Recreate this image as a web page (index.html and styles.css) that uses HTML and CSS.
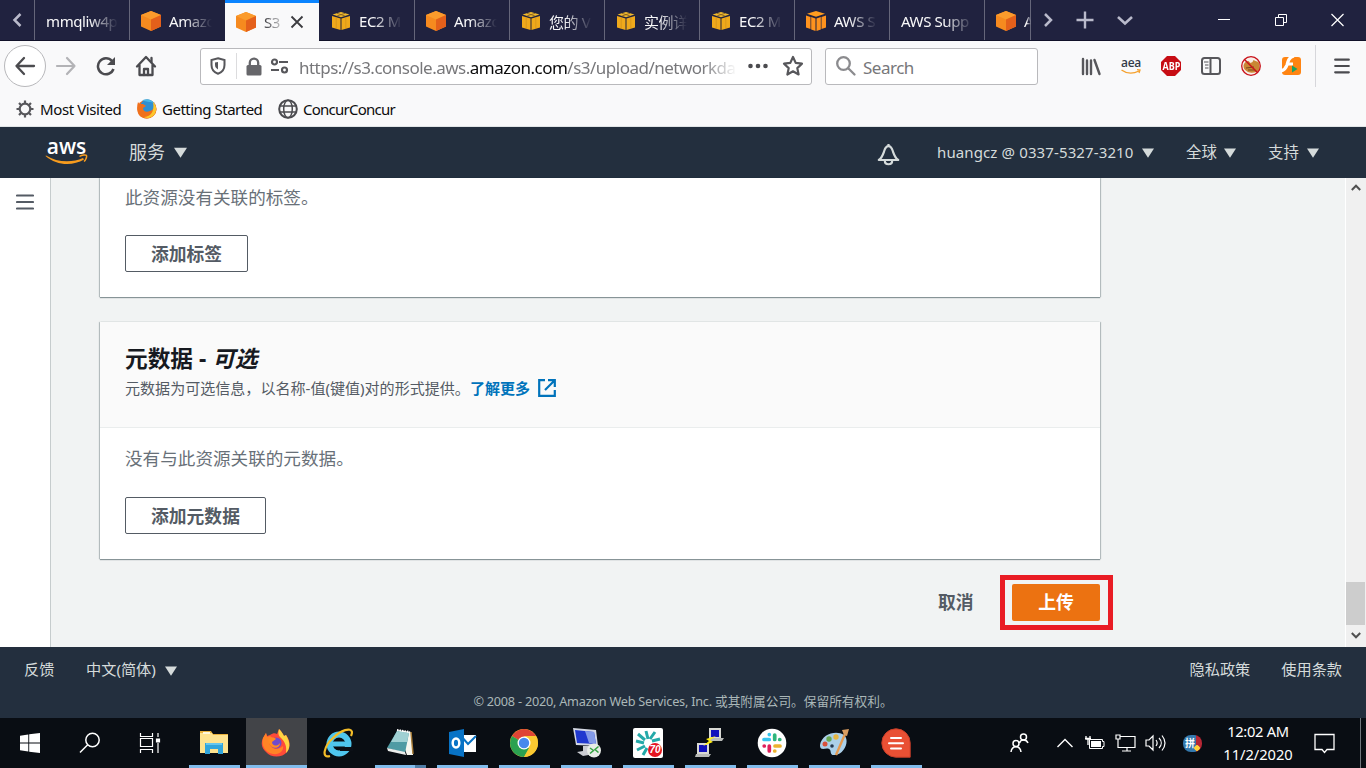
FILE: index.html
```html
<!DOCTYPE html>
<html lang="zh-CN">
<head>
<meta charset="utf-8">
<title>S3 Management Console</title>
<link rel="stylesheet" href="styles.css">
</head>
<body>
<svg width="0" height="0" class="defs" aria-hidden="true">
  <defs>
    <symbol id="cube" viewBox="0 0 20 20"><path d="M10 0 20 4V15.500L10 20 0 15.500V4z" fill="#f68a1f"/><path d="M10 0 20 4 10 8.500 0 4z" fill="#fb9b2c"/><path d="M10 8.500 20 4V15.500L10 20z" fill="#e4601b"/></symbol>
    <symbol id="box" viewBox="0 0 20 20"><path d="M10 1 18.500 3.500 10 6.200 1.500 3.500z" fill="#f0b92e"/><path d="M1 5 9.500 7.500V19L1 16.500zM19 5l-8.500 2.500V19l8.500-2.500z" fill="#efa91b"/><path d="M6 2.300 14 5M14 2.300 6 5" stroke="#7d5a22" stroke-width=".8"/><path d="M5.200 6.300V17.500M14.800 6.300V17.500" stroke="#c98c1c" stroke-width=".6"/></symbol>
    <symbol id="boxo" viewBox="0 0 20 20"><path d="M10 0 19 2.800 10 5.800 1 2.800z" fill="#ff9d20"/><path d="M0 4.500 4.500 5.900V18L0 16.500zM5.200 6.100 9.500 7.400V20l-4.300-1.600zM20 4.500l-4.500 1.400V18l4.500-1.500zM14.800 6.100l-4.300 1.300V20l4.300-1.600z" fill="#ff931e"/></symbol>
    <symbol id="caret" viewBox="0 0 12 10"><path d="M0 .5h12L6 9.800z" fill="#d5dbdb"/></symbol>
  </defs>
</svg>

<div class="tabbar">
  <div class="tabs-left"><svg width="10" height="16" viewBox="0 0 10 16" fill="none" stroke="#b9bacb" stroke-width="2.500"><path d="M8.500 2 2.500 8l6 6"/></svg></div>
  <div class="tab plain"><span class="fade">mmqliw4p</span></div>
  <div class="tab"><svg class="fav"><use href="#cube"/></svg><span class="fade">Amazo</span></div>
  <div class="tab active"><svg class="fav"><use href="#cube"/></svg><span class="fade">S3</span><svg class="close" width="14" height="14" viewBox="0 0 14 14" stroke="#3c3c40" stroke-width="1.800"><path d="M1.500 1.500l11 11M12.500 1.500l-11 11"/></svg></div>
  <div class="tab first"><svg class="fav"><use href="#box"/></svg><span class="fade">EC2 M</span></div>
  <div class="tab"><svg class="fav"><use href="#cube"/></svg><span class="fade">Amazo</span></div>
  <div class="tab"><svg class="fav"><use href="#box"/></svg><span class="fade">您的 V</span></div>
  <div class="tab"><svg class="fav"><use href="#box"/></svg><span class="fade">实例详</span></div>
  <div class="tab"><svg class="fav"><use href="#box"/></svg><span class="fade">EC2 M</span></div>
  <div class="tab"><svg class="fav"><use href="#boxo"/></svg><span class="fade">AWS S</span></div>
  <div class="tab plain"><span class="fade">AWS Supp</span></div>
  <div class="tab cut"><svg class="fav"><use href="#cube"/></svg><span class="fade">A</span></div>
  <div class="tab-tools">
    <svg width="34" height="40" viewBox="0 0 34 40" fill="none" stroke="#b9bacb" stroke-width="2.500"><path d="M14 14l6 6-6 6"/></svg>
    <svg width="40" height="40" viewBox="0 0 40 40" stroke="#b9bacb" stroke-width="2.400"><path d="M20 11.500v17M11.500 20h17"/></svg>
    <svg width="40" height="40" viewBox="0 0 40 40" fill="none" stroke="#b9bacb" stroke-width="2.600"><path d="M13 17l7 6.500 7-6.500"/></svg>
  </div>
  <div class="window-tools">
    <svg width="57" height="40" viewBox="0 0 57 40" stroke="#fff"><path d="M23 19.500h12"/></svg>
    <svg width="57" height="40" viewBox="0 0 57 40" fill="none" stroke="#fff"><path d="M23.500 17.500h8v8h-8zM26.500 17v-2.500h8v8H32"/></svg>
    <svg width="57" height="40" viewBox="0 0 57 40" stroke="#fff" stroke-width="1.200"><path d="M22.500 14l12 12M34.500 14l-12 12"/></svg>
  </div>
</div>

<div class="navbar">
  <div class="back"><svg width="22" height="20" viewBox="0 0 22 20" fill="none" stroke="#4b4b4f" stroke-width="2.300" stroke-linecap="round" stroke-linejoin="round"><path d="M20 10H2.500M10 2 2.500 10l7.500 8"/></svg></div>
  <div class="navbtn"><svg width="22" height="20" viewBox="0 0 22 20" fill="none" stroke="#b3b3b6" stroke-width="2.200" stroke-linecap="round" stroke-linejoin="round"><path d="M2 10h17.500M12 2l7.500 8-7.500 8"/></svg></div>
  <div class="navbtn"><svg width="22" height="20" viewBox="0 0 22 20" fill="none" stroke="#4b4b4f" stroke-width="2.500"><path d="M17 5A8 8 0 1 0 18.500 13"/><path d="M20 1v8h-8z" fill="#4b4b4f" stroke="none"/></svg></div>
  <div class="navbtn"><svg width="22" height="22" viewBox="0 0 22 22" fill="none" stroke="#4b4b4f" stroke-width="2.300" stroke-linejoin="round" stroke-linecap="round"><path d="M2 11.500 11 2l9 9.500M4.500 10v10h13V10"/><path d="M9 20v-6h4v6M16.500 3v4" /></svg></div>
  <div class="urlbar">
    <svg class="shield" width="16" height="18" viewBox="0 0 16 18" fill="none" stroke="#57575b" stroke-width="2"><path d="M8 1.200 14.500 3v5c0 4.500-2.500 7.300-6.500 8.800C4 15.300 1.500 12.500 1.500 8V3z"/><path d="M8 5v7.500C5.500 11 5 9.500 5 7.500V5.500z" fill="#57575b" stroke="none"/></svg>
    <span class="urlsep"></span>
    <svg class="lock" width="16" height="19" viewBox="0 0 16 19"><path d="M3.800 9V5.800a4.200 4.200 0 0 1 8.400 0V9" fill="none" stroke="#66666a" stroke-width="2.300"/><rect x=".5" y="8" width="15" height="10.500" rx="1.500" fill="#66666a"/></svg>
    <svg class="perm" width="19" height="16" viewBox="0 0 19 16" fill="none" stroke="#57575b" stroke-width="2.200"><circle cx="4.500" cy="4" r="2.500"/><path d="M9 4h9M1 12h8"/><circle cx="14.500" cy="12" r="2.500"/></svg>
    <span class="url">https://s3.console.aws.<b>amazon.com</b>/s3/upload/networkda</span>
    <svg class="dots" width="20" height="6" viewBox="0 0 20 6" fill="#4b4b4f"><circle cx="2.500" cy="3" r="2.300"/><circle cx="10" cy="3" r="2.300"/><circle cx="17.500" cy="3" r="2.300"/></svg>
    <svg class="star" width="22" height="22" viewBox="0 0 22 22" fill="none" stroke="#57575b" stroke-width="2.200" stroke-linejoin="round"><path d="M11 2l2.700 5.900 6.300.8-4.700 4.400 1.300 6.400L11 16.300l-5.600 3.200 1.300-6.400L2 8.700l6.300-.8z"/></svg>
  </div>
  <div class="search">
    <svg width="22" height="22" viewBox="0 0 22 22" fill="none" stroke="#8b8b8e" stroke-width="2.300" stroke-linecap="round"><circle cx="8.500" cy="8.500" r="6.300"/><path d="M13.500 13.500l6 6"/></svg>
    <span>Search</span>
  </div>
  <div class="extensions">
    <svg width="40" height="20" viewBox="0 0 40 20" stroke="#57575b" stroke-width="2.400" stroke-linecap="round"><path d="M12 3v15M16 4.500V18M20 4.500V18M23.500 4l5 14"/></svg>
    <span class="aea">aea<svg width="20" height="6" viewBox="0 0 20 6" fill="none" stroke="#f5a02c" stroke-width="1.300"><path d="M.5 1C6 5 12 5 18 2M16 .7l3 .3-1 3"/></svg></span>
    <span class="abp"><span>ABP</span></span>
    <svg width="40" height="20" viewBox="0 0 40 20" fill="none" stroke="#57575b" stroke-width="2"><rect x="11" y="2" width="18" height="16" rx="2.500"/><path d="M19.500 2v16"/><path d="M13 6h4.500M14 9h3.500M14 12h3.500" stroke-width="1.200"/></svg>
    <svg width="40" height="20" viewBox="0 0 40 20"><circle cx="20" cy="10" r="9.300" fill="#f8eee8"/><path d="M12.500 10c0-2 2-5 5-5l2 2 2-1 1-2 2 1 3 1c2 4 1 9-2 10-4 1-8 1-10-1-2-1-3-3-3-5z" fill="#c98735"/><path d="M15 12l8-1M17 14h7" stroke="#7a481d"/><circle cx="20" cy="10" r="9.300" fill="none" stroke="#c9121a" stroke-width="1.300"/><path d="M13.500 3.500l13 13" stroke="#c9121a" stroke-width="1.500"/></svg>
    <svg width="40" height="20" viewBox="0 0 40 20"><rect x="11" y="1" width="19" height="18" rx="3" fill="#ff8411"/><path d="M23 0c-5 1-6 5-7 9-1 3-3 5-6 6M16 8h6" stroke="#fff" stroke-width="3.200" fill="none"/><path d="M21 9.500l5.500 3.500-5.500 3.500z" fill="#1ba260"/></svg>
  </div>
  <div class="menu"><svg width="16" height="16" viewBox="0 0 16 16" stroke="#4b4b4f" stroke-width="2.200" stroke-linecap="round"><path d="M1.200 1.700h13.600M1.200 8h13.600M1.200 14.300h13.600"/></svg></div>
</div>

<div class="bookmarks">
  <svg width="18" height="18" viewBox="0 0 18 18" fill="none" stroke="#57575b" stroke-width="2.200"><circle cx="9" cy="9" r="5.300"/><path d="M9 .5V4M9 14v3.500M.5 9H4M14 9h3.500M3 3l2.500 2.500M12.500 12.500 15 15M15 3l-2.500 2.500M5.500 12.500 3 15"/></svg>
  <span class="bm1">Most Visited</span>
  <svg width="20" height="20" viewBox="0 0 20 20"><circle cx="10" cy="10" r="9.500" fill="#ed6b1d"/><circle cx="10.500" cy="8" r="7.500" fill="#2f8fd2"/><path d="M5 1.500C9-1 15 0 18 5c-3-2-4-2-6-2z" fill="#49b8ea"/><path d="M1 3c1 2 3 2 5 2l3 2-3 2c0 3 3 5 7 3 3-1 5-4 5-7 2 4 2 8-1 11-4 5-12 4-15 0C-.5 12-.2 7 1 3z" fill="#f0701c"/><path d="M16 3c4 4 4 9 1 13-3 3-7 4-10 2 6 0 11-5 9-15z" fill="#fcc72c"/></svg>
  <span class="bm2">Getting Started</span>
  <svg width="20" height="20" viewBox="0 0 20 20" fill="none" stroke="#4b4b4f" stroke-width="1.500"><circle cx="10" cy="10" r="8.800" stroke-width="2"/><ellipse cx="10" cy="10" rx="4.300" ry="8.800"/><path d="M2 7h16M2 13h16"/></svg>
  <span class="bm3">ConcurConcur</span>
</div>

<header class="aws-header">
  <div class="aws-logo">aws<svg width="43" height="13" viewBox="0 0 43 13"><path d="M1 1.500C12 8.500 27 9 38 4l1 1.500C28 12 12 12 .5 2z" fill="#f79c1e"/><path d="M34.500 2.500C37 .8 41 .7 41.500 1.500c.5 1-.5 4.500-2.500 6" fill="none" stroke="#f79c1e" stroke-width="1.500"/></svg></div>
  <div class="services"><span>服务</span><svg class="caret big"><use href="#caret"/></svg></div>
  <svg class="bell" width="23" height="23" viewBox="0 0 23 23" fill="none" stroke="#d5dbdb" stroke-width="2.200" stroke-linejoin="round"><path d="M11.500 1V3M1.800 17c3.500-2.500 4.200-5.500 5.400-9 .9-2.800 2.300-4.800 4.300-4.800s3.400 2 4.300 4.800c1.200 3.500 1.900 6.500 5.400 9z"/><path d="M7.800 17.500c0 5 7.400 5 7.400 0"/></svg>
  <div class="account">huangcz @ 0337-5327-3210</div><svg class="caret"><use href="#caret"/></svg>
  <div class="region">全球</div><svg class="caret"><use href="#caret"/></svg>
  <div class="support">支持</div><svg class="caret"><use href="#caret"/></svg>
</header>

<div class="workspace">
  <aside class="sidebar"><svg width="18" height="16" viewBox="0 0 18 16" stroke="#545b64" stroke-width="2.200" stroke-linecap="round"><path d="M1 1.500h16M1 8h16M1 14.500h16"/></svg></aside>
  <main class="content">
    <section class="card tags">
      <p class="empty">此资源没有关联的标签。</p>
      <button class="btn">添加标签</button>
    </section>
    <section class="card meta">
      <div class="card-head">
        <h2>元数据 - <i>可选</i></h2>
        <p>元数据为可选信息，以名称-值(键值)对的形式提供。<a>了解更多</a><svg width="18" height="18" viewBox="0 0 18 18" fill="none" stroke="#0073bb" stroke-width="2.200"><path d="M7 1.200H1.200v15.600h15.600V11M10 1.200h6.800V8M16.500 1.500 7 11"/></svg></p>
      </div>
      <div class="card-body">
        <p class="empty">没有与此资源关联的元数据。</p>
        <button class="btn">添加元数据</button>
      </div>
    </section>
    <div class="actions">
      <button class="cancel">取消</button>
      <div class="highlight"><button class="upload">上传</button></div>
    </div>
  </main>
  <div class="scrollbar">
    <svg width="10" height="7" viewBox="0 0 10 7" fill="none" stroke="#505050" stroke-width="2"><path d="M.8 6 5 1.700 9.200 6"/></svg>
    <span class="thumb"></span>
    <svg width="10" height="7" viewBox="0 0 10 7" fill="none" stroke="#505050" stroke-width="2"><path d="M.8 1 5 5.300 9.200 1"/></svg>
  </div>
</div>

<footer class="aws-footer">
  <div class="links"><span class="feedback">反馈</span><span>中文(简体)</span><svg class="caret"><use href="#caret"/></svg><span class="privacy">隐私政策</span><span>使用条款</span></div>
  <div class="copyright"><span>© 2008 - 2020, Amazon Web Services, Inc. </span>或其附属公司。保留所有权利。</div>
</footer>

<div class="taskbar">
  <div class="sys"><svg width="20" height="20" viewBox="0 0 20 20" fill="#fff"><path d="M0 2.800 8.300 1.500V9.500H0zM9.200 1.300 20 0V9.500H9.200zM0 10.500h8.300v8L0 17.200zM9.200 10.500H20V20L9.200 18.700z"/></svg></div>
  <div class="sys"><svg width="22" height="22" viewBox="0 0 22 22" fill="none" stroke="#fff" stroke-width="1.500"><circle cx="13.500" cy="8" r="6.700"/><path d="M8.700 12.800 1 20.500"/></svg></div>
  <div class="sys"><svg width="22" height="20" viewBox="0 0 22 20" fill="none" stroke="#fff" stroke-width="1.200"><path d="M1.500 0v3.500h12V0M1.500 20v-3.500h12V20M1.500 5.500h12v8h-12zM19 0v4M19 10v10"/><path d="M17.500 6h3v3h-3z" fill="#fff"/></svg></div>
  <div class="app first-app"><svg viewBox="0 0 30 30"><path d="M1 3h11l2 3h15v19H1z" fill="#e9b13c"/><path d="M1 5h12l1 2h15v18H1z" fill="#ffe38f"/><path d="M4 4h7v2H4z" fill="#fff8dc"/><path d="M6 26V15h18v11h-5v-5h-8v5z" fill="#32a5dc"/><path d="M7 15h16v2H7z" fill="#65c6ef"/></svg></div>
  <div class="app current"><svg viewBox="0 0 30 30"><path d="M2 10l3-5 1 3 3-1c3-2 5-2 7-1l2-5c3 3 4 5 5 7l2-1c4 5 5 12 1 17-5 6-16 6-21 0C0 19 0 15 2 10z" fill="#ff4b38"/><path d="M2 10l3-5 1 4 3-1 4 3-5 3c1 7 9 9 14 4 1 5-4 9-10 8C4 25 0 17 2 10z" fill="#ff8426"/><path d="M18 1c3 3 4 5 5 7l2-1c5 8 4 14 0 18 1-7-1-11-5-15-3-3-3-5-2-9z" fill="#ffd542"/><circle cx="15" cy="15" r="5.500" fill="#704bcb"/><path d="M7 11c3-2 6-2 8 0l-4 3c0 4 5 5 8 1 0 7-11 7-12-4z" fill="#ff8b22"/></svg></div>
  <div class="app idle"><svg viewBox="0 0 30 30"><circle cx="16" cy="16" r="9.500" fill="none" stroke="#4fc6ee" stroke-width="6"/><path d="M9 13.500h16v5H9z" fill="#4fc6ee"/><path d="M17 19h13v4H17z" fill="#0b0f16"/><path d="M7 28C-2 31 1 18 10 10 18 2 28-1 29 4c0 1 0 2-1 4" fill="none" stroke="#f4bd28" stroke-width="2.200"/></svg></div>
  <div class="app split"><svg viewBox="0 0 30 30"><path d="M13 2 26 4 28 27 22 27z" fill="#f7f7ef"/><path d="M26 4l2 22" stroke="#a87c38" stroke-width="1.500"/><path d="M12 3 24 5 20 25 2 20z" fill="#4f9ba4"/><path d="M12 3 24 5 22 14 6 14z" fill="#9fd0d3"/><path d="M2 20l18 4 1 3-18-4z" fill="#eceeec"/><path d="M12 2l13 2" stroke="#fff" stroke-width="2" stroke-dasharray="1.500 1"/></svg></div>
  <div class="app"><svg viewBox="0 0 30 30"><path d="M14 7h15v17H14z" fill="#fff"/><path d="M14 8l7 8 8-8" fill="none" stroke="#0872c4" stroke-width="2"/><path d="M2 4 17 1v28L2 26z" fill="#0873c6"/><ellipse cx="9" cy="15" rx="3.300" ry="4.500" fill="none" stroke="#fff" stroke-width="2.500"/></svg></div>
  <div class="app"><svg viewBox="0 0 30 30"><circle cx="15" cy="15" r="14" fill="#fbc931"/><path d="M15 15 2.900 8A14 14 0 0 1 27.100 8z" fill="#df4435"/><path d="M15 15 2.900 8A14 14 0 0 0 15 29l5-9z" fill="#2ba151"/><path d="M15 8h12.100A14 14 0 0 1 15 29l6-10z" fill="#fbc931"/><circle cx="15" cy="15" r="6.500" fill="#fff"/><circle cx="15" cy="15" r="5.200" fill="#4688ed"/></svg></div>
  <div class="app"><svg viewBox="0 0 30 30"><path d="M2 0 25 2 27 18 5 17z" fill="#d4d8e4"/><path d="M4 2 23 4 25 16 6 15z" fill="#2038cf"/><path d="M14 3 23 4 25 16 18 15z" fill="#839ae8"/><path d="M12 18h7v5l4 3-11 2-6-4 6-1z" fill="#cbcdd3"/><circle cx="23" cy="22.500" r="7" fill="#e8ece7"/><path d="M19 20l3.500 2.500L19 25.500M27.500 18.500 24 21.500l3.500 3" fill="none" stroke="#35a343" stroke-width="1.500"/></svg></div>
  <div class="app"><svg viewBox="0 0 30 30"><rect width="30" height="30" rx="2" fill="#fff"/><g stroke="#24a9a9" stroke-width="3"><path d="M13 3l2 8M22 4l-5 7M27 11l-8 2M5 6l7 6M3 13l8 2M4 22l8-4M10 27l4-7"/></g><circle cx="22" cy="22" r="7" fill="#e51420"/></svg><span class="count">70</span></div>
  <div class="app"><svg viewBox="0 0 30 30"><path d="M14 0h12v11H14zM2 15h12v11H2z" fill="#d8d8d4"/><path d="M16 2h8v7h-8zM4 17h8v7H4z" fill="#1010bd"/><path d="M15 10h14l-2 3H15zM1 26h15l-2 3H0z" fill="#b8bab8"/><path d="M21 8 11 11l3 2-6 5 10-4-3-2z" fill="#ffed13"/></svg></div>
  <div class="app"><svg viewBox="0 0 30 30"><circle cx="15" cy="15" r="14.300" fill="#fff"/><g fill="none" stroke-width="3.700" stroke-linecap="round"><path d="M12.300 11.500H7M12.300 6.500v.1" stroke="#36c5f0"/><path d="M17.700 7v4.500M22.700 11.500h.1" stroke="#2eb67d"/><path d="M12.300 18v5M7.200 18h.1" stroke="#e01e5a"/><path d="M18 18h5M17.700 23h.1" stroke="#ecb22e"/></g></svg></div>
  <div class="app"><svg viewBox="0 0 30 30"><path d="M1 17C3 6 17 2 25 7c6 5 1 19-9 20-6 1-3-5-6-6-3-2-9 3-9-4z" fill="#abd0e9"/><circle cx="6" cy="16" r="2.500" fill="#d9503a"/><circle cx="10" cy="11" r="2.700" fill="#69a850"/><circle cx="17" cy="9" r="2.700" fill="#e7b642"/><circle cx="13" cy="18" r="1.800" fill="#25384e"/><path d="M26 6 17 27" stroke="#e69a50" stroke-width="2.300"/><path d="M23 2l7-1-2 7-3-1z" fill="#d89c60"/></svg></div>
  <div class="app"><svg viewBox="0 0 30 30"><path d="M15 .8a14.200 14.200 0 0 1 14.200 14.200v14.200H15A14.200 14.200 0 0 1 15 .8z" fill="#e95034" stroke="#c73e29"/><path d="M10 10h10M8 15.200h14M10 20.500h10" stroke="#fff" stroke-width="2" stroke-linecap="round"/></svg></div>
  <div class="tray">
    <svg class="people" width="20" height="20" viewBox="0 0 20 20" fill="none" stroke="#fff" stroke-width="1.500"><circle cx="13.500" cy="4" r="3"/><path d="M9.500 10c1-4 7-4 8.500 0"/><circle cx="6" cy="10.500" r="3"/><path d="M1 19c1-7 9-7 10 0"/></svg>
    <svg class="up" width="18" height="10" viewBox="0 0 18 10" fill="none" stroke="#fff" stroke-width="1.400"><path d="M1.500 9 9 1.500 16.500 9"/></svg>
    <svg class="battery" width="20" height="15" viewBox="0 0 20 15"><path d="M4.500 3.500h13v2H19v5h-1.500v2h-13z" fill="none" stroke="#fff"/><path d="M6 5h10v6H6z" fill="#fff"/><path d="M1 0v3h4V0M0 2.500h6M3 3v6" fill="none" stroke="#fff" stroke-width="1.300"/></svg>
    <svg class="net" width="21" height="18" viewBox="0 0 21 18" fill="none" stroke="#fff" stroke-width="1.200"><path d="M5 2.500h15v11H3V7M12 14v3M7 17h9M1 1h4v4H1zM3 5v3"/></svg>
    <svg class="sound" width="21" height="18" viewBox="0 0 21 18" fill="none" stroke="#fff" stroke-width="1.200"><path d="M1 6h3l4-4v14l-4-4H1zM11 6c1.500 2 1.500 4 0 6M14 4c3 3 3 7 0 10M17 1.500c4 5 4 10 0 15"/></svg>
    <span class="ime">拼</span>
    <div class="clock"><span>12:02 AM</span><span>11/2/2020</span></div>
    <svg class="notice" width="21" height="21" viewBox="0 0 21 21" fill="none" stroke="#fff" stroke-width="1.300"><path d="M1 1.500h19v15h-7l-2.500 3-2.500-3H1z"/></svg>
    <span class="peek"></span>
  </div>
</div>
</body>
</html>
```
FILE: styles.css
```css
* { box-sizing: border-box; }
body { margin: 0; width: 1366px; height: 768px; overflow: hidden; font-family: "Noto Sans", "Noto Sans CJK SC", sans-serif; background: #f9f9fa; }
svg { display: block; flex: none; }
p, h2 { margin: 0; }
button { font: inherit; padding: 0; white-space: nowrap; }
.defs { position: absolute; }

.tabbar { display: flex; height: 41px; background: #20223f; border-bottom: 1px solid #101128; }
.tabs-left { width: 34px; display: flex; align-items: center; padding-left: 12px; }
.tab { width: 95px; flex: none; border-left: 1px solid #65667a; display: flex; align-items: center; padding: 2px 0 0 11px; font-size: 15px; color: #f9f9fa; }
.tab.first { border-left-color: transparent; }
.tab.active { background: #f9f9fa; color: #38383d; border-left: 0; border-top: 3px solid #0a84ff; height: 41px; padding-top: 0; padding-left: 11px; margin-left: 1px; width: 94px; }
.tab.cut { width: 47px; border-right: 1px solid #65667a; }
.tab.cut .fade { width: 7px; overflow: hidden; }
.fav { width: 20px; height: 20px; margin-right: 8px; }
.fade { flex: none; width: 43px; white-space: nowrap; letter-spacing: -.4px; -webkit-mask-image: linear-gradient(90deg, #000 35%, transparent); mask-image: linear-gradient(90deg, #000 35%, transparent); }
.plain .fade { width: 72px; -webkit-mask-image: linear-gradient(90deg, #000 60%, transparent); mask-image: linear-gradient(90deg, #000 60%, transparent); }
.active .fade { width: 18px; -webkit-mask-image: linear-gradient(90deg, #000, rgba(0,0,0,.2)); mask-image: linear-gradient(90deg, #000, rgba(0,0,0,.2)); }
.close { margin-left: 8px; }
.tab-tools { display: flex; }
.window-tools { display: flex; margin-left: auto; }

.navbar { height: 50px; display: flex; align-items: center; padding-left: 4px; }
.back { width: 42px; height: 42px; border: 1px solid #b8b8bb; border-radius: 50%; background: #fff; display: flex; align-items: center; justify-content: center; }
.navbtn { width: 40px; display: flex; justify-content: center; }
.urlbar { width: 612px; height: 37px; margin-left: 34px; border: 1px solid #b9b9bc; border-radius: 3px; background: #fff; display: flex; align-items: center; padding-left: 9px; }
.urlsep { width: 1px; height: 26px; background: #dcdcde; margin: 0 9px 0 10px; }
.perm { margin-left: 8px; }
.url { width: 438px; margin: 2px 11px 0 10px; white-space: nowrap; font-size: 17px; letter-spacing: -.51px; color: #77777a; -webkit-mask-image: linear-gradient(90deg, #000 92%, transparent); mask-image: linear-gradient(90deg, #000 92%, transparent); }
.url b { color: #0c0c0d; font-weight: 400; }
.star { margin-left: 14px; }
.search { width: 213px; height: 37px; margin-left: 13px; border: 1px solid #b9b9bc; border-radius: 3px; background: #fff; display: flex; align-items: center; padding-left: 9px; gap: 6px; font-size: 17px; letter-spacing: -.5px; color: #77777a; }
.search span { margin-top: 2px; }
.extensions { display: flex; align-items: center; margin-left: 33px; }
.aea { width: 40px; display: flex; flex-direction: column; align-items: center; font: 600 12px/10px "Open Sans", sans-serif; color: #333b48; gap: 1px; letter-spacing: -.3px; }
.abp { width: 20px; height: 20px; margin: 0 10px; background: #c70d14; color: #fff; clip-path: polygon(30% 0, 70% 0, 100% 30%, 100% 70%, 70% 100%, 30% 100%, 0 70%, 0 30%); font: bold 10.500px/20px "Open Sans", sans-serif; display: flex; justify-content: center; }
.abp span { transform: scaleX(.85); }
.menu { margin-left: 4px; height: 42px; border-left: 1px solid #d7d7db; padding-left: 18px; display: flex; align-items: center; }

.bookmarks { height: 36px; display: flex; align-items: center; padding: 1px 0 0 16px; font-size: 15px; color: #0c0c0d; white-space: nowrap; border-bottom: 1px solid #e1e5e6; }
.bookmarks span { margin-left: 6px; letter-spacing: -.4px; }
.bm1 { width: 97px; }
.bm2 { width: 116px; }
.bookmarks .bm2 { margin-left: 5px; letter-spacing: -.5px; }
.bookmarks .bm3 { margin-left: 5px; letter-spacing: -.75px; }

.aws-header { height: 51px; background: #232f3e; display: flex; align-items: center; color: #d5dbdb; white-space: nowrap; }
.aws-logo { width: 43px; margin-left: 45px; height: 28px; display: flex; flex-direction: column; align-items: center; font: 600 21px/15px "Open Sans", sans-serif; color: #fff; }
.services { display: flex; align-items: center; margin-left: 41px; font-size: 18px; width: 100px; }
.services span { margin-bottom: 3px; }
.caret { width: 12px; height: 10px; }
.caret.big { width: 13px; height: 11px; margin-left: 9px; margin-bottom: 1px; }
.bell { margin-left: 648px; margin-top: 3px; }
.account { margin-left: 37px; width: 205px; font-size: 15px; letter-spacing: .12px; margin-bottom: 1px; }
.region { margin-left: 32px; width: 38px; font-size: 15.400px; margin-bottom: 2px; }
.support { margin-left: 32px; width: 39px; font-size: 15.400px; margin-bottom: 2px; }

.workspace { height: 469px; display: flex; background: #f1f3f3; }
.sidebar { width: 51px; background: #fff; border-right: 1px solid #c6cccd; padding: 16px 0 0 16px; }
.content { width: 1294px; padding-left: 49px; }
.card { width: 1000px; background: #fff; box-shadow: 0 1px 1px rgba(0,28,36,.4), 1px 0 1px rgba(0,28,36,.2), -1px 0 1px rgba(0,28,36,.2); }
.tags { height: 119px; padding: 6px 25px 0; }
.meta { height: 237px; margin-top: 25px; }
.empty { font-size: 17.600px; line-height: 26px; color: #687078; }
.btn { display: block; height: 37px; padding: 0 25px 2px; background: #fff; border: 1px solid #545b64; border-radius: 2px; color: #545b64; font-size: 17.800px; font-weight: 700; }
.tags .btn { margin-top: 25px; }
.card-head { height: 106px; background: #fafafa; border-bottom: 1px solid #eaeded; padding: 22px 25px 0; color: #16191f; }
.card-head h2 { font-size: 22.700px; line-height: 30px; font-weight: 700; }
.card-head p { display: flex; align-items: center; font-size: 15.050px; line-height: 28px; color: #545b64; }
.card-head a { color: #0073bb; font-weight: 700; margin-right: 8px; }
.card-body { padding: 17px 25px 0; }
.card-body .btn { margin-top: 26px; }
.actions { display: flex; align-items: center; margin: 16px 0 0 838px; }
.cancel { border: 0; background: none; color: #545b64; font-size: 17.800px; font-weight: 700; width: 62px; text-align: left; padding-bottom: 4px; }
.highlight { width: 113px; height: 55px; border: 5px solid #e91c24; padding: 4px 8px 4px 7px; }
.upload { width: 88px; height: 37px; background: #ec7211; border: 0; border-radius: 2px; color: #fff; font-size: 17.800px; font-weight: 700; padding-bottom: 4px; }
.scrollbar { width: 21px; background: #f0f0f0; border-left: 1px solid #fff; display: flex; flex-direction: column; align-items: center; padding: 6px 1px 8px 0; }
.thumb { width: 19px; height: 43px; background: #cdcdcd; margin: auto 0 7px; }

.aws-footer { height: 71px; background: #232f3e; color: #d5dbdb; padding: 10px 24px 0; font-size: 15.200px; }
.links { display: flex; align-items: center; height: 26px; white-space: nowrap; }
.links span { margin-bottom: 4px; }
.feedback { width: 62px; }
.links .caret { margin-left: 9px; width: 12px; margin-top: 1px; }
.privacy { margin-left: auto; margin-right: 31px; }
.copyright { text-align: center; font-size: 12.700px; line-height: 20px; margin-top: 8px; color: #aab7b8; white-space: nowrap; }
.copyright span { letter-spacing: -.23px; white-space: pre; }

.taskbar { height: 50px; background: #090d13; display: flex; }
.sys { width: 60px; display: flex; align-items: center; justify-content: center; }
.app { width: 62px; flex: none; position: relative; display: flex; align-items: center; justify-content: center; padding-right: 2px; background: linear-gradient(#81bcec, #81bcec) 5px 47px / 51px 3px no-repeat; }
.app svg { width: 30px; height: 30px; }
.first-app { margin-left: 4px; }
.current { background: linear-gradient(#81bcec, #81bcec) 0 47px / 61px 3px no-repeat, linear-gradient(#424448, #424448) 0 0 / 61px 50px no-repeat; }
.idle { background: none; }
.split { background: linear-gradient(90deg, #81bcec 40px, #507da6 40px) 5px 47px / 51px 3px no-repeat; }
.count { position: absolute; left: 30px; top: 25px; width: 14px; color: #fff; font: bold italic 10px/14px "Liberation Sans", sans-serif; text-align: center; }
.tray { margin-left: auto; display: flex; align-items: center; color: #fff; }
.up { margin-left: 26px; }
.battery { margin-left: 11px; }
.net { margin-left: 10px; }
.sound { margin-left: 9px; }
.ime { width: 19px; height: 17px; margin-left: 17px; border-radius: 8px; background: radial-gradient(circle at 14px 13px, #ffd23b 2.500px, transparent 3px), linear-gradient(90deg, #3479ae 70%, #b82735 70%); font: bold 10px/15px "Noto Sans CJK SC", sans-serif; padding-left: 2px; }
.clock { width: 70px; margin-left: 21px; display: flex; flex-direction: column; align-items: center; font-size: 14.700px; line-height: 23px; letter-spacing: -.3px; white-space: nowrap; }
.clock span:last-child { letter-spacing: -.05px; }
.notice { margin-left: 21px; }
.peek { width: 1px; height: 50px; background: #70757b; margin: 0 5px 0 25px; }
```
